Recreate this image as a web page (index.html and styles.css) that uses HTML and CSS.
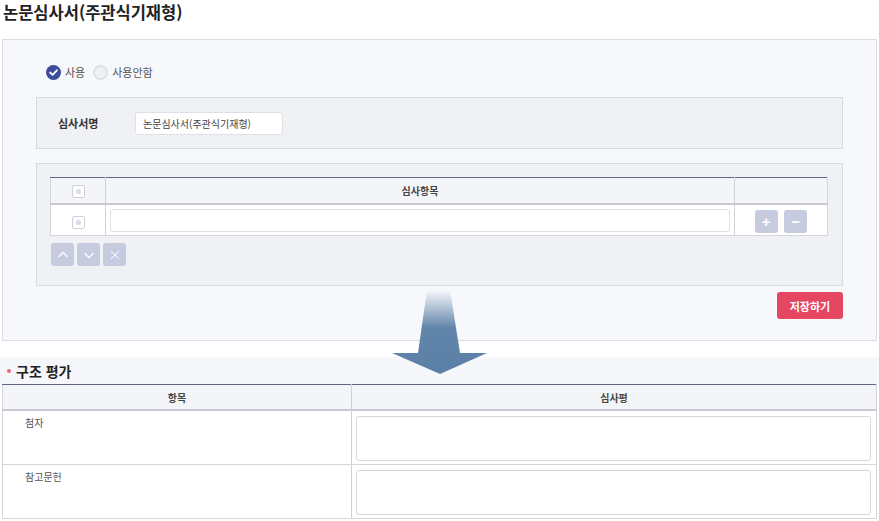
FILE: index.html
```html
<!DOCTYPE html>
<html lang="ko">

<head>
    <meta charset="UTF-8">
    <title>논문심사서(주관식기재형)</title>
    <link rel="stylesheet" href="styles.css">
</head>

<body>
    <h1 class="page-title">논문심사서(주관식기재형)</h1>

    <div class="panel">
        <div class="radio-row">
            <label class="radio checked"><span class="radio-dot">
                    <svg width="15" height="15" viewBox="0 0 15 15">
                        <circle cx="7.5" cy="7.5" r="7.5" fill="#3a4c9a" />
                        <path d="M4.2 7.6 L6.6 9.9 L10.9 5.3" fill="none" stroke="#fff" stroke-width="1.9"
                            stroke-linecap="round" stroke-linejoin="round" />
                    </svg></span>사용</label>
            <label class="radio"><span class="radio-dot">
                    <svg width="15" height="15" viewBox="0 0 15 15">
                        <circle cx="7.5" cy="7.5" r="6.6" fill="#eef0f4" stroke="#dcdee4" stroke-width="1.6" />
                    </svg></span>사용안함</label>
        </div>

        <div class="box name-box">
            <span class="field-label">심사서명</span>
            <input class="text-input name-input" type="text" value="논문심사서(주관식기재형)">
        </div>

        <div class="box items-box">
            <table class="grid">
                <thead>
                    <tr>
                        <th class="col-check"><span class="chk"></span></th>
                        <th>심사항목</th>
                        <th class="col-act"></th>
                    </tr>
                </thead>
                <tbody>
                    <tr>
                        <td class="col-check"><span class="chk"></span></td>
                        <td class="col-input"><input class="text-input item-input" type="text"></td>
                        <td class="col-act">
                            <button class="sq-btn">+</button>
                            <button class="sq-btn">&minus;</button>
                        </td>
                    </tr>
                </tbody>
            </table>
            <div class="move-btns">
                <button class="sq-btn">
                    <svg width="12" height="12" viewBox="0 0 12 12"><path d="M1.5 8 L6 3.5 L10.5 8" fill="none" stroke="#fff" stroke-width="1.3" /></svg>
                </button>
                <button class="sq-btn">
                    <svg width="12" height="12" viewBox="0 0 12 12"><path d="M1.5 4 L6 8.5 L10.5 4" fill="none" stroke="#fff" stroke-width="1.3" /></svg>
                </button>
                <button class="sq-btn">
                    <svg width="12" height="12" viewBox="0 0 12 12"><path d="M2 2 L10 10 M10 2 L2 10" fill="none" stroke="#fff" stroke-width="1" /></svg>
                </button>
            </div>
        </div>

        <div class="actions">
            <button class="save-btn">저장하기</button>
        </div>
    </div>

    <!-- arrow between the editor and the preview -->
    <svg class="flow-arrow" width="96" height="88" viewBox="0 0 96 88">
        <defs>
            <linearGradient id="fade" x1="0" y1="0" x2="0" y2="1">
                <stop offset="0" stop-color="#5a7fa6" stop-opacity="0" />
                <stop offset="0.45" stop-color="#5a7fa6" stop-opacity="0.95" />
                <stop offset="1" stop-color="#5a7fa6" />
            </linearGradient>
        </defs>
        <path d="M35 2 L58 2 L68 65 L95 65 L48 86 L0 65 L26 65 Z" fill="url(#fade)" />
    </svg>

    <div class="section-head"><span class="bullet"></span>구조 평가</div>
    <table class="review">
        <thead>
            <tr>
                <th class="col-item">항목</th>
                <th>심사평</th>
            </tr>
        </thead>
        <tbody>
            <tr>
                <td class="item-name">첨자</td>
                <td class="item-text"><textarea></textarea></td>
            </tr>
            <tr>
                <td class="item-name">참고문헌</td>
                <td class="item-text"><textarea></textarea></td>
            </tr>
        </tbody>
    </table>
</body>

</html>
```

FILE: styles.css
```css
body {
    margin: 0;
    background: #fff;
    font-family: "Noto Sans CJK KR", "Noto Sans", sans-serif;
    color: #333;
    position: relative;
}

.page-title {
    margin: 0;
    padding: 0 0 0 3px;
    height: 39px;
    line-height: 24px;
    font-size: 16.5px;
    font-weight: bold;
    color: #222;
}

.panel {
    margin: 0 2px;
    border: 1px solid #dcdde2;
    background: #f7f8fc;
    padding: 24px 33px 21px 33px;
}

.radio-row {
    display: flex;
    align-items: center;
    height: 16px;
    padding-left: 10px;
    margin-bottom: 17px;
    font-size: 11px;
    color: #555;
}

.radio {
    display: flex;
    align-items: center;
    margin-right: 8px;
}

.radio-dot {
    display: flex;
    margin-right: 4px;
}

.box {
    background: #f0f1f5;
    border: 1px solid #d9dadf;
}

.name-box {
    display: flex;
    align-items: center;
    height: 50px;
    padding: 0 21px;
}

.field-label {
    width: 77px;
    font-size: 11px;
    font-weight: bold;
    color: #333;
}

.text-input {
    box-sizing: border-box;
    border: 1px solid #dfe0e4;
    border-radius: 3px;
    background: #fff;
    font-family: inherit;
    font-size: 10px;
    color: #444;
    outline: none;
}

.name-input {
    width: 148px;
    height: 23px;
    padding: 0 7px;
}

.items-box {
    margin-top: 14px;
    margin-bottom: 6px;
    padding: 13px 14px 19px 13px;
}

.grid {
    width: 100%;
    border-collapse: collapse;
    border: 1px solid #d5d6db;
    border-top: 1px solid #5c6587;
}

.grid th {
    height: 25px;
    padding: 0;
    background: #f4f5f8;
    border-left: 1px solid #d0d1d6;
    border-bottom: 2px solid #c9cacf;
    font-size: 10px;
    font-weight: bold;
    color: #444;
}

.grid th:first-child,
.grid td:first-child {
    border-left: none;
}

.grid td {
    height: 30px;
    background: #fff;
    border-left: 1px solid #d0d1d6;
    padding: 0;
}

.col-check {
    width: 54px;
    text-align: center;
}

.col-act {
    width: 92px;
    text-align: center;
}

.col-input {
    padding: 0 4px !important;
}

.item-input {
    width: 100%;
    height: 23px;
    display: block;
}

.chk {
    display: inline-block;
    width: 11px;
    height: 11px;
    border: 1px solid #cfd1d6;
    border-radius: 2px;
    background: #fff;
    position: relative;
    vertical-align: middle;
}

.chk::after {
    content: "";
    position: absolute;
    left: 3px;
    top: 3px;
    width: 5px;
    height: 5px;
    border-radius: 50%;
    background: #d6dbe8;
}

.sq-btn {
    width: 23px;
    height: 23px;
    border: none;
    border-radius: 3px;
    background: #c6cbdf;
    color: #fff;
    font-size: 15px;
    font-weight: bold;
    line-height: 23px;
    padding: 0;
    display: inline-flex;
    align-items: center;
    justify-content: center;
    vertical-align: middle;
}

.col-act .sq-btn {
    margin: 0 1px;
}

.move-btns {
    display: flex;
    gap: 3px;
    margin-top: 7px;
    padding-left: 1px;
}

.actions {
    display: flex;
    justify-content: flex-end;
}

.save-btn {
    width: 66px;
    height: 27px;
    border: none;
    border-radius: 3px;
    background: #e54763;
    color: #fff;
    font-family: inherit;
    font-size: 11px;
    font-weight: bold;
}

.flow-arrow {
    position: absolute;
    left: 392px;
    top: 288px;
}

.section-head {
    margin-top: 16px;
    height: 27px;
    background: #f6f7fb;
    display: flex;
    align-items: center;
    padding-left: 7px;
    font-size: 14px;
    font-weight: bold;
    color: #222;
}

.bullet {
    width: 4px;
    height: 4px;
    border-radius: 50%;
    background: #e8686f;
    margin-right: 5px;
}

.review {
    margin: 0 2px;
    width: calc(100% - 4px);
    border-collapse: collapse;
    border: 1px solid #d5d6db;
    border-top: 1px solid #5c6587;
}

.review th {
    height: 24px;
    padding: 0;
    background: #f4f5f8;
    border-bottom: 2px solid #c9cacf;
    border-left: 1px solid #d0d1d6;
    font-size: 10px;
    font-weight: bold;
    color: #444;
}

.review th:first-child,
.review td:first-child {
    border-left: none;
}

.col-item {
    width: 348px;
}

.review td {
    background: #fff;
    border-left: 1px solid #d0d1d6;
    border-bottom: 1px solid #d5d6db;
    padding: 0;
}

.item-name {
    vertical-align: top;
    padding: 4px 0 0 22px !important;
    font-size: 10px;
    color: #555;
    height: 49px;
}

.item-text {
    padding: 4px 5px 3px 4px !important;
}

.item-text textarea {
    display: block;
    box-sizing: border-box;
    width: 100%;
    height: 45px;
    border: 1px solid #d7d8dc;
    border-radius: 3px;
    resize: none;
    outline: none;
}
```
